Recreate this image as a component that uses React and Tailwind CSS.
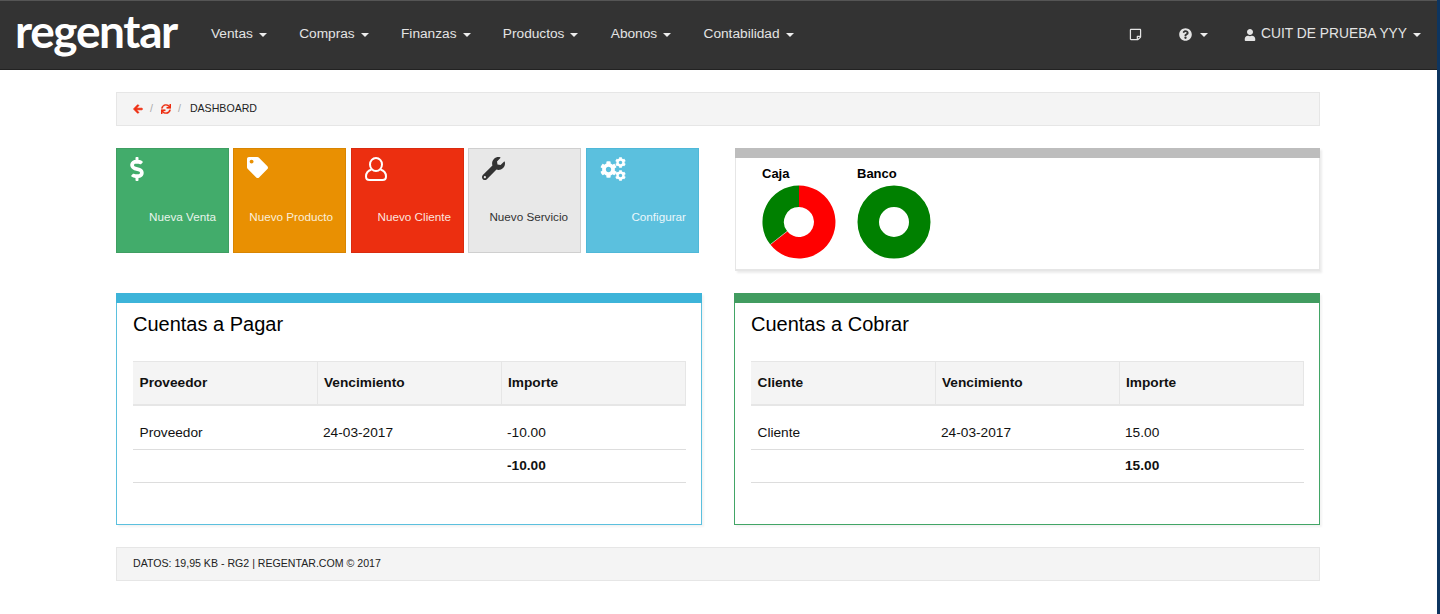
import { FaDollarSign, FaTag, FaWrench, FaCog, FaArrowLeft, FaSync, FaRegStickyNote, FaQuestionCircle, FaUser } from 'react-icons/fa';

const menu = ['Ventas', 'Compras', 'Finanzas', 'Productos', 'Abonos', 'Contabilidad'];

function Caret({ className = 'ml-[6px]' }) {
  return <span className={`inline-block w-0 h-0 align-middle border-x-[4px] border-x-transparent border-t-[4px] border-t-[#eee] ${className}`} />;
}

function Tile({ icon, label, className, iconClass }) {
  return (
    <div className={`relative w-[113px] h-[105px] border flex items-center justify-end pr-[12px] pt-[33px] text-[11.7px] ${className}`}>
      <div className={`absolute ${iconClass}`}>{icon}</div>
      {label}
    </div>
  );
}

function UserOutline() {
  return (
    <svg width="22" height="24" viewBox="0 0 22 24" fill="none" stroke="#fff" strokeWidth="2">
      <ellipse cx="11" cy="7.5" rx="6" ry="6.5" />
      <path d="M6.5 12.5C3 13.5 1 16.5 1 19.5 1 22 2.5 23 4.5 23H17.5C19.5 23 21 22 21 19.5 21 16.5 19 13.5 15.5 12.5" />
    </svg>
  );
}

function Cogs() {
  return (
    <div className="relative w-[26px] h-[24px] text-white">
      <FaCog className="absolute left-0 top-[4px] text-[17px]" />
      <FaCog className="absolute right-0 top-0 text-[11px]" />
      <FaCog className="absolute right-0 bottom-0 text-[11px]" />
    </div>
  );
}

function Donut({ title, children }) {
  return (
    <div className="w-[73px]">
      <div className="text-[13px] font-bold text-black leading-[16px] mb-[3px]">{title}</div>
      <svg width="74" height="74" viewBox="0 0 74 74">{children}</svg>
    </div>
  );
}

function Panel({ title, color, barClass, first, rows }) {
  return (
    <div className={`w-[586px] h-[232px] border ${color} shadow-[2px_2px_2px_rgba(0,0,0,0.05)]`}>
      <div className={`h-[10px] -mx-px -mt-px ${barClass}`} />
      <div className="px-[16px]">
        <h2 className="text-[20px] leading-[24px] text-black mt-[9px] mb-[25px]">{title}</h2>
        <table className="w-[553px] table-fixed text-[13.7px] text-[#111] border-collapse">
          <thead>
            <tr className="h-[43px] bg-[#f4f4f4] font-bold">
              <th className="w-[184px] text-left font-bold px-[6.5px] pt-[2px] border-t border-b-2 border-[#e6e6e6]">{first}</th>
              <th className="w-[184px] text-left font-bold px-[6.5px] pt-[2px] border-t border-b-2 border-l border-[#e6e6e6]">Vencimiento</th>
              <th className="text-left font-bold px-[6.5px] pt-[2px] border-t border-b-2 border-x border-[#e6e6e6]">Importe</th>
            </tr>
          </thead>
          <tbody>
            <tr className="h-[45px] border-b border-[#ddd]">
              <td className="px-[6.5px] pt-[12px]">{first}</td>
              <td className="px-[6px] pt-[12px]">24-03-2017</td>
              <td className="px-[6px] pt-[12px]">{rows[0]}</td>
            </tr>
            <tr className="h-[33px] border-b border-[#ddd]">
              <td className="px-[6px]"></td>
              <td className="px-[6px]"></td>
              <td className="px-[6px] font-bold">{rows[1]}</td>
            </tr>
          </tbody>
        </table>
      </div>
    </div>
  );
}

export default function App() {
  return (
    <div className="flex h-[614px] overflow-hidden bg-white font-['Liberation_Sans',Arial,sans-serif]">
      <div className="flex-1 min-w-0">
        {/* Navbar */}
        <nav className="h-[70px] bg-[#333333] border-t border-t-[#555] border-b border-b-[#222] flex items-center text-[13.7px] text-[#e4e4e4] pb-[1px]">
          <span className="ml-[15px] w-[196px] font-['Lato',sans-serif] font-bold text-white text-[46px] leading-none tracking-[-1.35px] -mt-[7px]">regentar</span>
          <div className="flex gap-[32.3px]">
            {menu.map((m) => (
              <span key={m} className="whitespace-nowrap">{m}<Caret /></span>
            ))}
          </div>
          <div className="ml-auto flex items-center pr-[16px]">
            <FaRegStickyNote className="text-[13px] mr-[37px]" />
            <FaQuestionCircle className="text-[13px]" />
            <Caret className="ml-[8px]" />
            <FaUser className="text-[12px] ml-[36px] mr-[5px]" />
            <span className="whitespace-nowrap text-[13.8px]">CUIT DE PRUEBA YYY<Caret /></span>
          </div>
        </nav>

        <div className="w-[1204px] ml-[116px]">
          {/* Breadcrumb */}
          <div className="mt-[22px] h-[34px] bg-[#f4f4f4] border border-[#e6e6e6] flex items-center px-[16px] text-[10.6px] text-[#222]">
            <FaArrowLeft strokeWidth={40} className="text-[10px] text-[#ee2d10]" />
            <span className="mx-[7px] text-[#aaa]">/</span>
            <FaSync strokeWidth={10} className="text-[10px] text-[#ee2d10] ml-px" />
            <span className="ml-[7px] mr-[9px] text-[#aaa]">/</span>
            <span>DASHBOARD</span>
          </div>

          {/* Tiles and charts */}
          <div className="mt-[22px] flex justify-between items-start">
            <div className="flex gap-[4px]">
              <Tile label="Nueva Venta" className="bg-[#42ac6b] border-[#3f9e62] text-[#e8f5ec]" iconClass="left-[8px] top-[8px]" icon={<FaDollarSign className="text-[24px] text-white" />} />
              <Tile label="Nuevo Producto" className="bg-[#e99002] border-[#d88502] text-[#fbeed8]" iconClass="left-[13px] top-[8px]" icon={<FaTag className="text-[21px] text-white" />} />
              <Tile label="Nuevo Cliente" className="ml-px bg-[#ec2f10] border-[#d92b0f] text-[#fde4df]" iconClass="left-[13px] top-[8px]" icon={<UserOutline />} />
              <Tile label="Nuevo Servicio" className="bg-[#e8e8e8] border-[#cfcfcf] text-[#333]" iconClass="left-[13px] top-[8px]" icon={<FaWrench className="text-[23px] text-[#333]" />} />
              <Tile label="Configurar" className="ml-px bg-[#5bc0de] border-[#4fb8d8] text-[#eaf7fb]" iconClass="left-[13px] top-[8px]" icon={<Cogs />} />
            </div>
            <div className="w-[585px] h-[123px] border-x border-b-2 border-[#e6e6e6] shadow-[2px_2px_2px_rgba(0,0,0,0.08)]">
              <div className="h-[10px] -mx-px bg-[#bdbdbd]" />
              <div className="flex gap-[22px] pl-[26px] pt-[8px]">
                <Donut title="Caja">
                  <path d="M37 .5A36.5 36.5 0 1 1 8.3 59.6L25.2 46.3A15 15 0 1 0 37 22Z" fill="#ff0000" />
                  <path d="M37 .5A36.5 36.5 0 0 0 8.3 59.6L25.2 46.3A15 15 0 0 1 37 22Z" fill="#008000" />
                  <path d="M8.3 59.6L25.2 46.3" stroke="#ddd" strokeWidth="0.6" />
                </Donut>
                <Donut title="Banco">
                  <circle cx="37" cy="37" r="25.75" fill="none" stroke="#008000" strokeWidth="21.5" />
                </Donut>
              </div>
            </div>
          </div>

          {/* Cuentas */}
          <div className="mt-[22px] flex justify-between">
            <Panel title="Cuentas a Pagar" first="Proveedor" color="border-[#5bc0de]" barClass="bg-[#3db4d9]" rows={['-10.00', '-10.00']} />
            <Panel title="Cuentas a Cobrar" first="Cliente" color="border-[#42a566]" barClass="bg-[#419c60]" rows={['15.00', '15.00']} />
          </div>

          {/* Footer */}
          <div className="mt-[22px] h-[34px] bg-[#f4f4f4] border border-[#e6e6e6] flex items-center px-[16px] text-[10.6px] text-[#222]">
            DATOS: 19,95 KB - RG2 | REGENTAR.COM © 2017
          </div>
        </div>
      </div>
      <div className="w-[3px] bg-[#0d3560]" />
    </div>
  );
}
